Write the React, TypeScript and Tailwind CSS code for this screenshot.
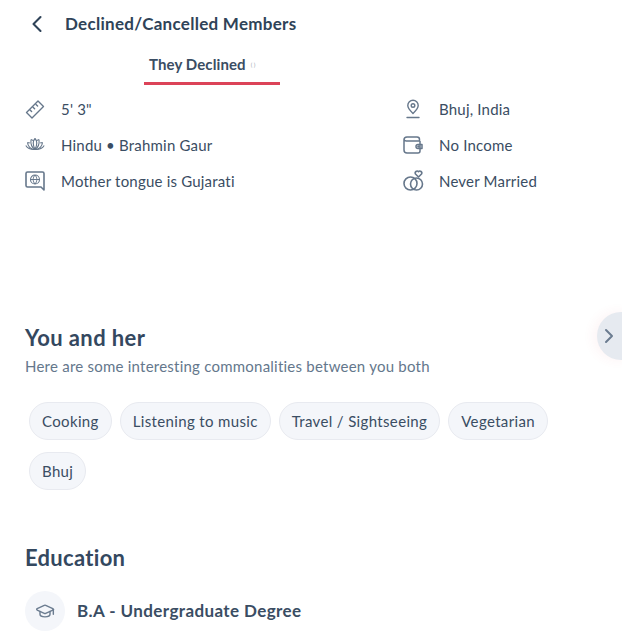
import { ChevronLeft, ChevronRight, GraduationCap } from 'lucide-react';
import type { ReactNode } from 'react';

const Ruler = () => (
  <svg width="20" height="20" viewBox="0 0 20 20" fill="none" stroke="currentColor" strokeWidth="1.400" strokeLinejoin="round" strokeLinecap="round">
    <path d="M1.500 13.500 13 2l5.500 5.500L7 19z" />
    <path d="M5 11l1.600 1.600M8 8.200l1.600 1.600M11 5.400l1.600 1.600" />
  </svg>
);

const Lotus = () => (
  <svg width="20" height="20" viewBox="0 0 20 20" fill="none" stroke="currentColor" strokeWidth="1.100" strokeLinejoin="round">
    <path d="M10 3.500c1.800 1.800 2.400 6 0 11-2.400-5-1.800-9.200 0-11z" />
    <path d="M6 4.500c1 .2 2 .8 2.700 1.700M14 4.500c-1 .2-2 .8-2.700 1.700M6 4.500c-.5 4 .8 8 4 10 3.200-2 4.500-6 4-10" />
    <path d="M2.500 7.500c.8 0 1.600.2 2.300.6M17.500 7.500c-.8 0-1.600.2-2.300.6M2.500 7.500c.3 3.500 3 7 7.500 7s7.200-3.500 7.500-7" />
    <path d="M.8 10.500c1.800 2.800 4.700 4.300 9.200 4 4.500.3 7.400-1.200 9.200-4" />
  </svg>
);

const Globe = () => (
  <svg width="20" height="20" viewBox="0 0 20 20" fill="none" stroke="currentColor" strokeLinejoin="round">
    <path strokeWidth="1.600" d="M2.500 1h15a1.500 1.500 0 0 1 1.500 1.500V19l-3-3H2.500A1.500 1.500 0 0 1 1 14.500v-12A1.500 1.500 0 0 1 2.500 1z" />
    <circle cx="10" cy="8.500" r="4.500" strokeWidth="1.100" />
    <path strokeWidth="1" d="M5.500 8.500h9M10 4c-2.400 2.600-2.400 6.400 0 9M10 4c2.400 2.600 2.400 6.400 0 9" />
  </svg>
);

const MapPinLine = () => (
  <svg width="20" height="20" viewBox="0 0 20 20" fill="none" stroke="currentColor" strokeWidth="1.400" strokeLinejoin="round" strokeLinecap="round">
    <path d="M10 14.500C7 11.500 4.800 9.300 4.800 6.500a5.200 5.200 0 0 1 10.400 0c0 2.800-2.200 5-5.200 8z" />
    <circle cx="10" cy="6.500" r="1.800" />
    <path d="M4 18.500h12" />
  </svg>
);

const Wallet = () => (
  <svg width="20" height="20" viewBox="0 0 20 20" fill="none" stroke="currentColor" strokeWidth="1.500" strokeLinejoin="round">
    <path d="M1 5a3 3 0 0 1 3-3h10a2.500 2.500 0 0 1 2.500 2.500V6H3.500A2.500 2.500 0 0 1 1 4.500V15a3 3 0 0 0 3 3h11a2 2 0 0 0 2-2V6" />
    <path d="M19 9.500h-4a2 2 0 0 0 0 4h4z" />
    <circle cx="15.500" cy="11.500" r=".6" fill="currentColor" />
  </svg>
);

const Rings = () => (
  <svg width="22" height="22" viewBox="0 0 22 22" fill="none" stroke="currentColor" strokeWidth="1.600" strokeLinejoin="round">
    <circle cx="7.500" cy="13.500" r="6.500" />
    <circle cx="13.500" cy="14" r="6" />
    <path d="M15.500 7l-3-3a1.900 1.900 0 0 1 3-2.300 1.900 1.900 0 0 1 3 2.300z" />
  </svg>
);

const details: { icon: ReactNode; text: string }[] = [
  { icon: <Ruler />, text: '5\' 3"' },
  { icon: <MapPinLine />, text: 'Bhuj, India' },
  { icon: <Lotus />, text: 'Hindu • Brahmin Gaur' },
  { icon: <Wallet />, text: 'No Income' },
  { icon: <Globe />, text: 'Mother tongue is Gujarati' },
  { icon: <Rings />, text: 'Never Married' },
];

const interests = ['Cooking', 'Listening to music', 'Travel / Sightseeing', 'Vegetarian', 'Bhuj'];

export default function App() {
  return (
    <div className="relative h-[637px] w-[622px] overflow-hidden bg-white font-['Lato',sans-serif] text-[#3a4d63]">
      {/* Header */}
      <div className="flex h-12 items-center pl-[23px]">
        <ChevronLeft className="h-[28px] w-[28px] text-[#2f4358]" strokeWidth={1.800} />
        <h1 className="ml-[14px] text-[17px] font-bold tracking-[0.28px] text-[#2f4358]">Declined/Cancelled Members</h1>
      </div>

      {/* Tab */}
      <div className="ml-[144px] flex h-[37px] w-[136px] items-center border-b-[3px] border-[#dc4358] pb-[2px] pl-[5px]">
        <span className="text-[15px] font-bold tracking-[0.1px] text-[#3a4d63]">They Declined</span>
        <span className="ml-[5px] text-[6px] text-[#9aa5b1]">( )</span>
      </div>

      {/* Details */}
      <div className="mt-[6px] grid grid-cols-[378px_1fr] pl-[25px]">
        {details.map((d) => (
          <div key={d.text} className="flex h-9 items-center">
            <span className="flex w-[36px] text-[#66778b]">{d.icon}</span>
            <span className="text-[15px] tracking-[0.2px]">{d.text}</span>
          </div>
        ))}
      </div>

      {/* You and her */}
      <div className="pl-[25px] pt-[125px]">
        <h2 className="text-[22px] font-bold leading-[28px] tracking-[0.4px] text-[#34485f]">You and her</h2>
        <p className="mt-[4px] text-[15px] leading-[20px] tracking-[0.23px] text-[#64778c]">Here are some interesting commonalities between you both</p>
        <div className="mt-[26px] flex w-[540px] flex-wrap gap-x-[8px] gap-y-[12px] pl-[4px]">
          {interests.map((tag) => (
            <span key={tag} className="flex h-[38px] items-center rounded-full border border-[#e8eaf0] bg-[#f4f6fa] px-[12px] text-[15px] tracking-[0.35px]">
              {tag}
            </span>
          ))}
        </div>
      </div>

      {/* Education */}
      <div className="pl-[25px] pt-[54px]">
        <h2 className="text-[22px] font-bold leading-[28px] tracking-[0.3px] text-[#34485f]">Education</h2>
        <div className="mt-[19px] flex items-center">
          <span className="flex h-10 w-10 items-center justify-center rounded-full bg-[#f4f6fa] text-[#6b7c90]">
            <GraduationCap className="h-[20px] w-[20px]" strokeWidth={1.700} />
          </span>
          <span className="ml-3 text-[17px] font-bold tracking-[0.4px]">B.A - Undergraduate Degree</span>
        </div>
      </div>

      {/* Carousel arrow */}
      <button className="absolute left-[597px] top-[312px] flex h-12 w-12 items-center rounded-full bg-[#e6eaf0] text-[#6b7c90] shadow-[-4px_0_12px_rgba(220,67,88,0.06)]">
        <ChevronRight className="h-[24px] w-[24px]" strokeWidth={2} />
      </button>
    </div>
  );
}
